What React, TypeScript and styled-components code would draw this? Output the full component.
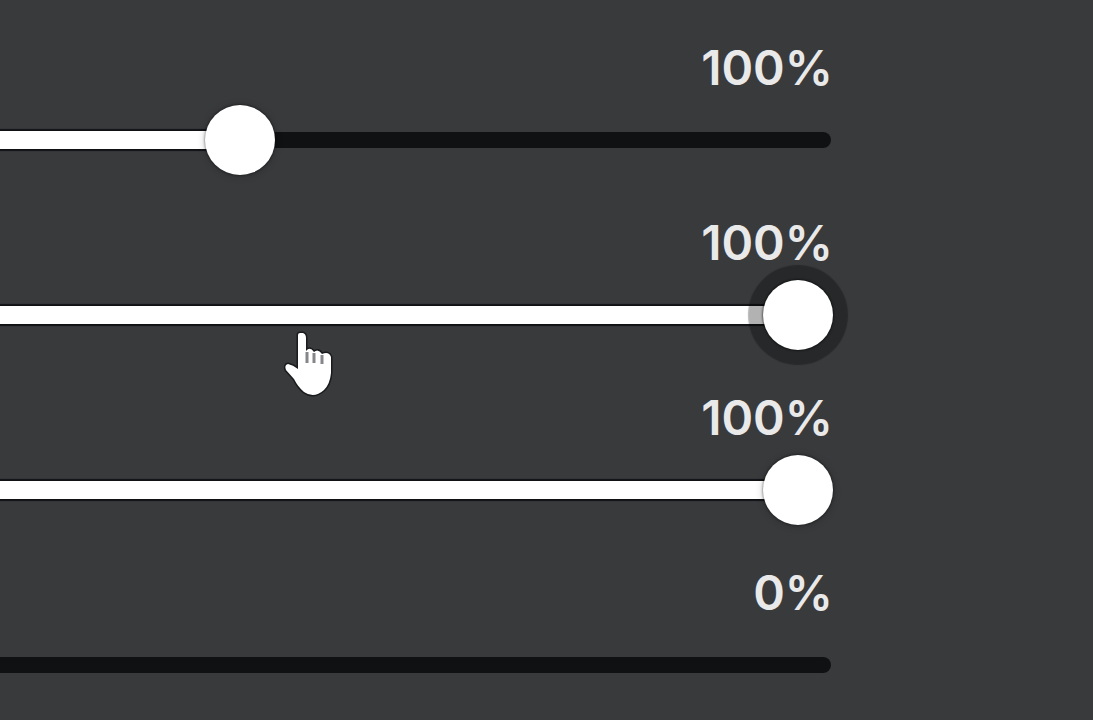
import React, { useState } from "react";
import styled, { createGlobalStyle } from "styled-components";

const GlobalStyle = createGlobalStyle`
  *, *::before, *::after { box-sizing: border-box; }
  body {
    margin: 0;
    background: #393a3c;
    color: #e9e9ea;
    font-family: Inter, "Liberation Sans", sans-serif;
  }
`;

const Page = styled.main`
  position: relative;
  min-height: 100vh;
  overflow: hidden;
`;

const Panel = styled.div`
  display: flex;
  flex-direction: column;
  margin-left: -120px;
  padding-right: 260px;
`;

const Setting = styled.section`
  display: flex;
  flex-direction: column;
`;

const ValueLabel = styled.label`
  align-self: flex-end;
  padding: 38px 0 7px;
  font-size: 48px;
  font-weight: 600;
  line-height: 60px;
`;

const Slider = styled.div`
  display: grid;
  align-items: center;
  height: 70px;

  > * {
    grid-area: 1 / 1;
  }
`;

const Track = styled.div`
  height: 16px;
  margin-right: 2px;
  border-radius: 8px;
  background: #101113;
`;

const Fill = styled.div`
  height: 18px;
  border-radius: 9px;
  background: #fff;
  box-shadow: 0 0 1px 2px #111214;
`;

const Range = styled.input<{ $pressed: boolean }>`
  appearance: none;
  width: 100%;
  height: 70px;
  margin: 0;
  background: transparent;
  cursor: pointer;
  z-index: 1;
  outline: none;

  &::-webkit-slider-runnable-track {
    height: 70px;
    background: transparent;
  }

  &::-webkit-slider-thumb {
    appearance: none;
    width: 70px;
    height: 70px;
    border: 0;
    border-radius: 50%;
    background: #fff;
    box-shadow: ${({ $pressed }) =>
      $pressed
        ? "0 0 2px 1px rgba(0, 0, 0, 0.5), 0 0 1px 15px rgba(0, 0, 0, 0.3)"
        : "0 0 2px 1px rgba(0, 0, 0, 0.3), 0 1px 8px 0 rgba(0, 0, 0, 0.2)"};
  }
`;

const Pointer = styled.svg`
  position: absolute;
  left: 280px;
  top: 326px;
  width: 60px;
  height: 76px;
  pointer-events: none;
  z-index: 2;
`;

type SliderProps = {
  id: string;
  text: string;
  initial: number;
  pressed?: boolean;
};

function SliderSetting({ id, text, initial, pressed = false }: SliderProps) {
  const [value, setValue] = useState(initial);
  return (
    <Setting>
      <ValueLabel htmlFor={id}>{text}</ValueLabel>
      <Slider>
        <Track />
        <Fill style={{ width: value > 0 ? `calc(${value}% + ${35 - value * 0.7}px)` : 0 }} />
        <Range
          id={id}
          type="range"
          min={0}
          max={100}
          step={0.1}
          value={value}
          $pressed={pressed}
          onChange={(event) => setValue(Number(event.target.value))}
        />
      </Slider>
    </Setting>
  );
}

export default function App() {
  return (
    <>
      <GlobalStyle />
      <Page>
        <Panel>
          <SliderSetting id="level-1" text="100%" initial={36.8} />
          <SliderSetting id="level-2" text="100%" initial={100} pressed />
          <SliderSetting id="level-3" text="100%" initial={100} />
          <SliderSetting id="level-4" text="0%" initial={0} />
        </Panel>
        <Pointer viewBox="0 0 60 76" aria-hidden="true">
          <path
            d="M18 9 Q18 7 20 7 H23 Q26 8 26 12 V25 Q30 20 34 26 Q38 22 42 28 Q49 25 51 31 V47 Q50 58 44 64 Q34 73 24 66 Q18 61 14 53 L6 44 Q4 39 8 38 Q13 39 18 43 Z"
            fill="#fff"
            stroke="#1a1b1d"
            strokeWidth="3"
            strokeLinejoin="round"
            paintOrder="stroke"
          />
          <path d="M27 26 V37 M34 27 V37 M42 29 V38" fill="none" stroke="#85868a" strokeWidth="3" />
        </Pointer>
      </Page>
    </>
  );
}
